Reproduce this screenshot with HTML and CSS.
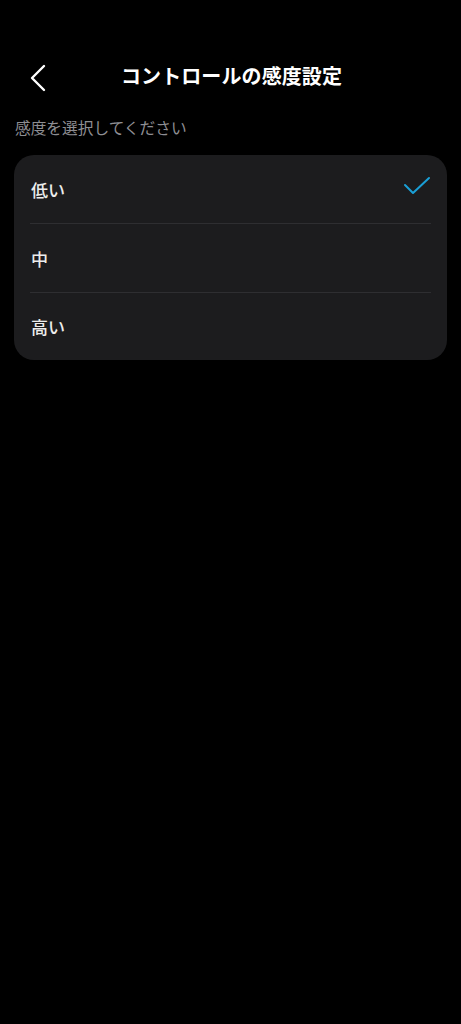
FILE: index.html
```html
<!DOCTYPE html>
<html lang="ja">
<head>
<meta charset="utf-8">
<link rel="stylesheet" href="styles.css">
</head>
<body>
<div class="screen">
  <header class="topbar">
    <button class="back" aria-label="戻る">
      <svg width="20" height="30" viewBox="0 0 20 30"><path d="M15 4 L3 16 L15 28" fill="none" stroke="#ffffff" stroke-width="2.4" stroke-linecap="round" stroke-linejoin="round"/></svg>
    </button>
    <h1 class="title">コントロールの感度設定</h1>
  </header>
  <p class="hint">感度を選択してください</p>
  <ul class="card">
    <li class="row">
      <span class="label">低い</span>
      <svg class="check" width="28" height="20" viewBox="0 0 28 20"><path d="M2 9 L10 17 L26 2" fill="none" stroke="#1a9fd6" stroke-width="2" stroke-linecap="round" stroke-linejoin="round"/></svg>
    </li>
    <li class="row"><span class="label">中</span></li>
    <li class="row"><span class="label">高い</span></li>
  </ul>
</div>
</body>
</html>
```

FILE: styles.css
```css
html, body {
  margin: 0;
  padding: 0;
  background: #000000;
}
body {
  font-family: "Noto Sans CJK JP", "Noto Sans", sans-serif;
  color: #ffffff;
  width: 461px;
  height: 1024px;
}
.screen {
  padding: 0 14px;
}
.topbar {
  position: relative;
  height: 64px;
  margin-top: 45px;
  display: flex;
  align-items: center;
  justify-content: center;
}
.back {
  position: absolute;
  left: 15px;
  top: 17px;
  background: none;
  border: 0;
  padding: 0;
  width: 20px;
  height: 30px;
  display: block;
}
.back svg { display: block; }
.title {
  margin: 0;
  font-size: 20px;
  font-weight: 700;
  line-height: 1;
  letter-spacing: 0.1px;
  transform: translate(1px, -1px);
}
.hint {
  margin: 0;
  margin-top: 8px;
  padding-left: 1px;
  font-size: 15.7px;
  line-height: 22px;
  color: #8e8e93;
}
.card {
  list-style: none;
  margin: 16px 0 0;
  padding: 0 16px;
  background: #1c1c1e;
  border-radius: 20px;
}
.row {
  height: 68px;
  display: flex;
  align-items: center;
  justify-content: space-between;
  border-bottom: 1px solid #2e2e31;
}
.row:last-child { border-bottom: 0; height: 67px; }
.label {
  font-size: 17px;
  font-weight: 500;
  color: #ececec;
  padding-left: 1px;
}
.check {
  display: block;
  margin-top: -6px;
}
```
